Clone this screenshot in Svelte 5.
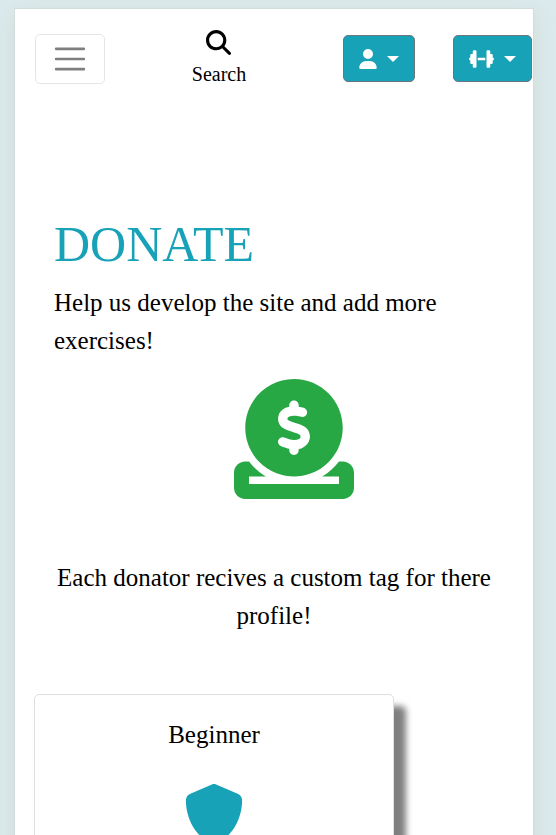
<script>
  const tiers = [{ name: 'Beginner', color: '#17a2b8' }];
</script>

<div class="page">
  <div class="sheet">
    <nav class="bar" aria-label="Main">
      <button class="toggler" type="button" aria-label="Toggle navigation">
        <svg width="38" height="38" viewBox="0 0 30 30" aria-hidden="true">
          <path stroke="rgba(0,0,0,0.5)" stroke-linecap="round" stroke-miterlimit="10" stroke-width="2" d="M4 7h22M4 15h22M4 23h22" />
        </svg>
      </button>

      <a class="search" href="#search">
        <svg width="25" height="25" viewBox="0 0 512 512" fill="currentColor" aria-hidden="true">
          <path d="M416 208c0 45.9-14.9 88.3-40 122.7L502.6 457.4c12.5 12.5 12.5 32.8 0 45.3s-32.8 12.5-45.3 0L330.7 376c-34.4 25.2-76.8 40-122.7 40C93.1 416 0 322.9 0 208S93.1 0 208 0S416 93.1 416 208zM208 352a144 144 0 1 0 0-288 144 144 0 1 0 0 288z" />
        </svg>
        <span>Search</span>
      </a>

      <div class="menus">
        <button class="menu" type="button" aria-label="Account">
          <svg width="18" height="20" viewBox="0 0 448 512" fill="currentColor" aria-hidden="true">
            <path d="M224 256A128 128 0 1 0 224 0a128 128 0 1 0 0 256zm-45.7 48C79.8 304 0 383.8 0 482.3C0 498.7 13.3 512 29.7 512H418.3c16.4 0 29.7-13.3 29.7-29.7C448 383.8 368.2 304 269.7 304H178.3z" />
          </svg>
          <span class="caret"></span>
        </button>
        <button class="menu" type="button" aria-label="Exercises">
          <svg width="25" height="20" viewBox="0 0 640 512" fill="currentColor" aria-hidden="true">
            <path d="M96 64c0-17.7 14.3-32 32-32h32c17.7 0 32 14.3 32 32V224v64V448c0 17.7-14.3 32-32 32H128c-17.7 0-32-14.3-32-32V384H64c-17.7 0-32-14.3-32-32V288c-17.7 0-32-14.3-32-32s14.3-32 32-32V160c0-17.7 14.3-32 32-32H96V64zm448 0v64h32c17.7 0 32 14.3 32 32v64c17.7 0 32 14.3 32 32s-14.3 32-32 32v64c0 17.7-14.3 32-32 32H544v64c0 17.7-14.3 32-32 32H480c-17.7 0-32-14.3-32-32V288 224 64c0-17.7 14.3-32 32-32h32c17.7 0 32 14.3 32 32zM416 224v64H224V224H416z" />
          </svg>
          <span class="caret"></span>
        </button>
      </div>
    </nav>

    <main>
      <header class="hero">
        <h1>DONATE</h1>
        <p>Help us develop the site and add more exercises!</p>
        <svg class="coin" width="120" height="120" viewBox="0 0 512 512" fill="#28a745" aria-hidden="true">
          <path d="M326.7 403.7c-22.1 8-45.9 12.3-70.7 12.3s-48.7-4.4-70.7-12.3c-.3-.1-.5-.2-.8-.3c-30-11-56.8-28.7-78.6-51.4C70 314.6 48 263.9 48 208C48 93.1 141.1 0 256 0S464 93.1 464 208c0 55.9-22 106.6-57.9 144c-1 1-2 2.1-3 3.1c-21.4 21.4-47.4 38.1-76.3 48.6zM256 91.9c-11.1 0-20.1 9-20.1 20.1v6c-5.6 1.2-10.9 2.9-15.9 5.1c-15 6.8-27.9 19.4-31.1 37.7c-1.8 10.2-.8 20 3.4 29c4.2 8.8 10.7 15 17.3 19.5c11.6 7.9 26.9 12.5 38.6 16l2.2 .7c13.9 4.2 23.4 7.4 29.3 11.7c2.5 1.8 3.4 3.2 3.7 4c.3 .8 .9 2.6 .2 6.7c-.6 3.5-2.5 6.4-8 8.8c-6.1 2.6-16 3.9-28.8 1.9c-6-1-16.7-4.6-26.2-7.9c-2.2-.7-4.3-1.5-6.4-2.1c-10.5-3.5-21.8 2.2-25.3 12.7s2.2 21.8 12.7 25.3c1.2 .4 2.7 .9 4.4 1.5c7.9 2.7 20.3 6.9 29.8 9.1V304c0 11.1 9 20.1 20.1 20.1s20.1-9 20.1-20.1v-5.5c5.3-1 10.5-2.5 15.4-4.6c15.7-6.7 28.4-19.7 31.6-38.7c1.8-10.4 1-20.3-3-29.4c-3.9-9-10.2-15.6-16.9-20.5c-12.2-8.8-28.3-13.7-40.4-17.4l-.8-.2c-14.2-4.3-23.8-7.3-29.9-11.4c-2.6-1.8-3.4-3-3.6-3.5c-.2-.3-.7-1.6-.1-5c.3-1.9 1.9-5.2 8.2-8.1c6.4-2.9 16.4-4.5 28.6-2.6c4.3 .7 17.9 3.3 21.7 4.3c10.7 2.8 21.6-3.5 24.5-14.2s-3.5-21.6-14.2-24.5c-4.4-1.2-14.4-3.2-21-4.4V112c0-11.1-9-20.1-20.1-20.1zM48 352H64c19.5 25.9 44 47.7 72.2 64H64v32H256 448V416H375.8c28.2-16.3 52.8-38.1 72.2-64h16c26.5 0 48 21.5 48 48v64c0 26.5-21.5 48-48 48H48c-26.5 0-48-21.5-48-48V400c0-26.5 21.5-48 48-48z" />
        </svg>
      </header>

      <p class="note">Each donator recives a custom tag for there profile!</p>

      <section class="tiers">
        {#each tiers as tier}
          <article class="card">
            <h2>{tier.name}</h2>
            <svg width="60" height="60" viewBox="0 0 512 512" fill={tier.color} aria-hidden="true">
              <path d="M256 0c4.6 0 9.2 1 13.4 2.9L457.7 82.8c22 9.3 38.4 31 38.3 57.2c-.5 99.2-41.3 280.7-213.6 363.2c-16.7 8-36.1 8-52.8 0C57.3 420.7 16.5 239.2 16 140c-.1-26.2 16.3-47.9 38.3-57.2L242.7 2.9C246.8 1 251.4 0 256 0z" />
            </svg>
          </article>
        {/each}
      </section>
    </main>
  </div>
</div>

<style>
  .page {
    box-sizing: border-box;
    height: 100vh;
    overflow-y: auto;
    scrollbar-width: none;
    padding: 8px 22px 0 14px;
    background: #dbeaed;
    color: #000;
    font: 25px/38px "Liberation Serif", "Times New Roman", serif;
  }

  .sheet {
    background: #fff;
    border: 1px solid #d3dbdc;
    box-shadow: 0 6px 20px rgba(190, 190, 170, 0.3);
  }

  h1,
  h2,
  p {
    margin: 0;
    font-weight: 400;
  }

  svg {
    display: block;
    flex: none;
  }

  .bar {
    display: flex;
    align-items: center;
    justify-content: space-between;
    padding: 21px 1px 0 20px;
  }

  .toggler {
    padding: 5px 15px;
    background: transparent;
    border: 1px solid rgba(0, 0, 0, 0.1);
    border-radius: 5px;
  }

  .search {
    display: flex;
    flex-direction: column;
    align-items: center;
    gap: 6px;
    color: #000;
    font-size: 20px;
    line-height: 26px;
    text-decoration: none;
  }

  .menus {
    display: flex;
    gap: 38px;
    padding-left: 10px;
  }

  .menu {
    display: flex;
    align-items: center;
    gap: 10px;
    height: 47px;
    padding: 0 15px;
    color: #fff;
    background: #17a2b8;
    border: 1px solid #6c757d;
    border-radius: 5px;
  }

  .caret {
    border-top: 6px solid currentColor;
    border-right: 6px solid transparent;
    border-left: 6px solid transparent;
  }

  .hero {
    padding: 127px 0 0 39px;
  }

  h1 {
    margin-bottom: 10px;
    color: #17a2b8;
    font-size: 50px;
    line-height: 60px;
  }

  .coin {
    margin: 19px auto 0;
  }

  .note {
    padding: 60px 20px 59px;
    text-align: center;
  }

  .tiers {
    padding: 0 19px 60px;
  }

  .card {
    box-sizing: border-box;
    display: flex;
    flex-direction: column;
    align-items: center;
    gap: 30px;
    max-width: 360px;
    min-height: 400px;
    padding: 21px 20px;
    background: #fff;
    border: 1px solid #dfdfdf;
    border-radius: 5px;
    box-shadow: 12px 12px 6px rgba(0, 0, 0, 0.5);
  }

  h2 {
    font-size: 25px;
  }
</style>
